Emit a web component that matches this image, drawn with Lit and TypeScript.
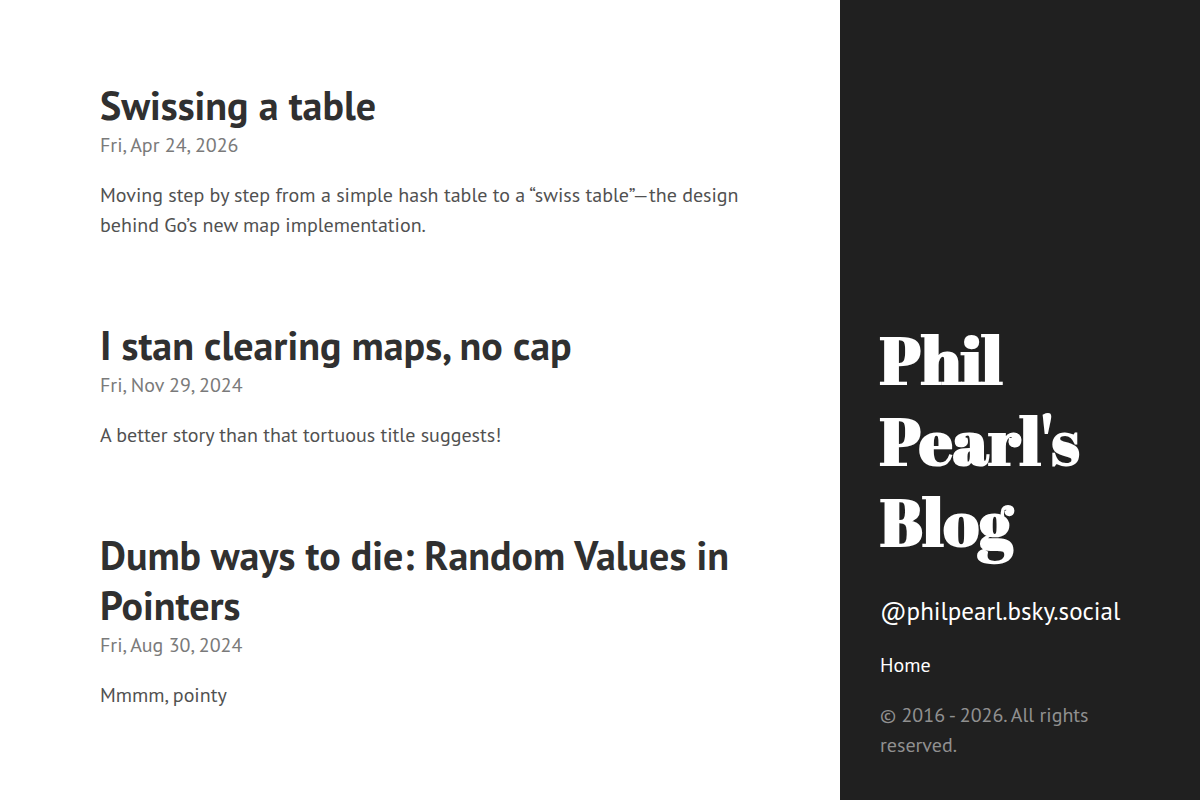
import { LitElement, html, css } from "lit";
import { customElement } from "lit/decorators.js";

const posts = [
  { title: "Swissing a table", date: "Fri, Apr 24, 2026", iso: "2026-04-24", summary: "Moving step by step from a simple hash table to a “swiss table”—the design behind Go’s new map implementation." },
  { title: "I stan clearing maps, no cap", date: "Fri, Nov 29, 2024", iso: "2024-11-29", summary: "A better story than that tortuous title suggests!" },
  { title: "Dumb ways to die: Random Values in Pointers", date: "Fri, Aug 30, 2024", iso: "2024-08-30", summary: "Mmmm, pointy" },
];

@customElement("app-root")
export class AppRoot extends LitElement {
  static styles = css`
    :host {
      display: grid;
      grid-template-columns: 7fr 3fr;
      min-height: 100vh;
      background: #fff;
      color: #515151;
      font: 20px/30px "PT Sans", "Noto Sans", "Open Sans", sans-serif;
    }
    * { box-sizing: border-box; }
    a { color: inherit; text-decoration: none; }
    main {
      display: flex;
      flex-direction: column;
      gap: 80px;
      padding: 80px 100px;
    }
    .title {
      margin: 0;
      color: #303030;
      font-size: 40px;
      line-height: 50px;
      font-weight: 700;
    }
    .date { display: block; color: #7a7a7a; }
    .summary { margin: 20px 0 0; }
    .sidebar {
      display: flex;
      flex-direction: column;
      justify-content: flex-end;
      gap: 20px;
      padding: 40px;
      background: #202020;
      color: #fff;
    }
    .brand {
      margin: 0 0 10px;
      font: 900 65px/81px "Abril Fatface", "Noto Serif Display", "Liberation Serif", serif;
    }
    .handle, .copyright { margin: 0; }
    .handle { font-size: 25px; line-height: 38px; }
    .copyright { color: #909090; }
  `;

  render() {
    return html`
      <main>
        ${posts.map(
          (p) => html`
            <article>
              <h2 class="title"><a href="#">${p.title}</a></h2>
              <time class="date" datetime=${p.iso}>${p.date}</time>
              <p class="summary">${p.summary}</p>
            </article>
          `
        )}
      </main>
      <aside class="sidebar">
        <h1 class="brand"><a href="#">Phil Pearl's Blog</a></h1>
        <p class="handle">@philpearl.bsky.social</p>
        <nav><a href="#">Home</a></nav>
        <p class="copyright">© 2016 - 2026. All rights reserved.</p>
      </aside>
    `;
  }
}
